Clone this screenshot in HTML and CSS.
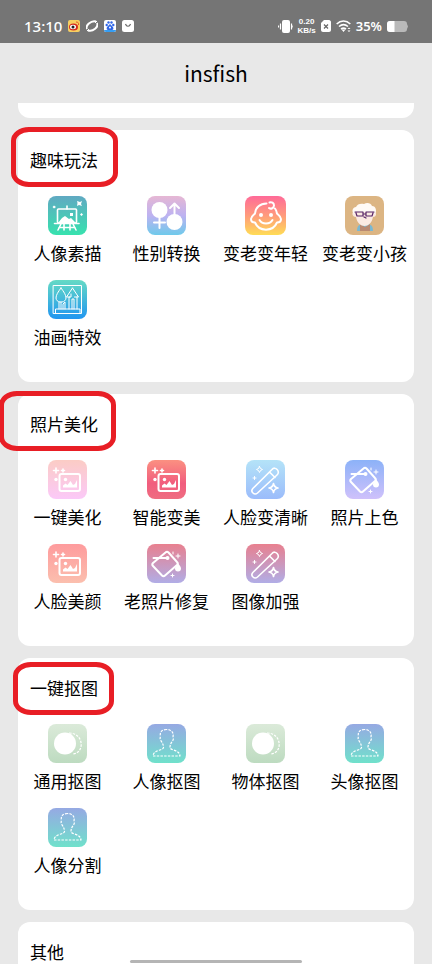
FILE: index.html
```html
<!DOCTYPE html>
<html lang="zh-CN">
<head>
    <meta charset="UTF-8">
    <meta name="viewport" content="width=device-width, initial-scale=1.0">
    <title>insfish</title>
    <link rel="stylesheet" href="styles.css">
</head>
<body>
    <!-- shared icon shapes -->
    <svg class="sprite" aria-hidden="true">
        <symbol id="i-easel" viewBox="0 0 39 39">
            <rect x="9.5" y="13" width="19" height="14" rx="1"/>
            <path d="M19 10v3M6.500 27.500H31M13 28l-3 6M25 28l3 6M16 28v6M22 28v6M11 31.500h16"/>
            <path class="solid" d="M10 27l4-5 3-2 4 3 2-1 5 5zM22 17h3v3h-3zM29 5l3 1 2-1-1 3 1 2-3-1-2 1 .5-3zM6 9.500l2 1.500-2 1.500L4.500 11zM33.500 17l1.500 1.500-1.500 1.500-1.500-1.500z"/>
        </symbol>
        <symbol id="i-gender" viewBox="0 0 39 39">
            <circle class="solid" cx="12.500" cy="14" r="8"/>
            <circle class="solid" cx="27.500" cy="26" r="8"/>
            <path class="thick" d="M12.500 20v12M7 26.500h11M27.500 20V8M23 12l4.500-4.500L32 12"/>
        </symbol>
        <symbol id="i-baby" viewBox="0 0 41 39">
            <path class="thick" d="M21.500 7.500C15 7.500 10.500 11.500 10 17.500c-1.500 1.500-4 3-4 5.500s2 3.500 4 3.500c4 9.500 18 9.500 22 0 2 0 4-1 4-3.500s-2.500-4-4-5.500c-.3-2-.8-3.500-2-5"/>
            <path class="thick" d="M24.500 6.500c2-1 4.500.5 4.500 3s-3 4-5 2.500"/>
            <path class="thick" d="M14.500 24c2.500 4.500 10.500 4.500 13 0"/>
            <circle class="solid" cx="16" cy="19" r="2"/>
            <circle class="solid" cx="26" cy="19" r="2"/>
        </symbol>
        <symbol id="i-elder" viewBox="0 0 39 39">
            <path fill="#79b8d2" stroke="none" d="M12 35c0-5 2-7 6-7h4c4 0 6 2 6 7z"/>
            <path fill="#b98a72" stroke="none" d="M15 35v-7l5 3 5-3v7z"/>
            <path fill="#fbeae2" stroke="none" d="M10 15c-4 1-3 6 1 6 1 6 5 9 8.500 9s7.500-3 8.500-9c4 0 4-5 0-6z"/>
            <path fill="#fffaf5" stroke="none" d="M9 18c-3-3-1-7 2-7 1-3 5-4 8-3 3-2 7-1 8 2 4 0 5 5 3 8l-3-2H12z"/>
            <path class="glasses" d="M10 16h8v4h-6l-1-3M29 16h-8v4h6l1-3M18 18h3M19 21l2 1"/>
        </symbol>
        <symbol id="i-paint" viewBox="0 0 39 39">
            <path class="thin" d="M5.500 5.500h28v28h-28zM13 8c3 4 5 7 5 10 0 2-2 4-4 4h-2c-2 0-4-2-4-4 0-3 2-6 5-10zM13 22v7M11 22v7M15 29v-5l2-2v7M24.500 8l6 9h-4M24.500 8l-6 9h3M21 29V17h2v-3M24 29V19h2v10M29 29V17M7.500 33v-4H32v4"/>
        </symbol>
        <symbol id="i-photo" viewBox="0 0 39 39">
            <rect class="thick" x="11.500" y="14" width="20.500" height="17" rx="2"/>
            <path class="solid" d="M15 27.500v-2l2.500-2 2 1.500 3-4 2.500 4 2-1 2-4v7.500z"/>
            <circle class="solid" cx="17.500" cy="19.500" r="1.700"/>
            <circle class="solid" cx="8" cy="19.500" r="1.700"/>
            <path d="M8 8v5M5.500 10.500h5M15 9v3M13.500 10.500h3"/>
        </symbol>
        <symbol id="i-wand" viewBox="0 0 39 39">
            <path d="M6.800 28.500L26 9.500c3-4 9 2 5 5.500L11.500 33c-3 2.500-7.500-1-4.700-4.500zM23.500 12l5.500 5.500"/>
            <path d="M27.500 23.500c.5 3 1.500 4 4.500 4.500-3 .5-4 1.500-4.500 4.500-.5-3-1.500-4-4.500-4.500 3-.5 4-1.500 4.500-4.500z"/>
            <path class="thin" d="M13.500 6.500l1 2 2 1-2 1-1 2-1-2-2-1 2-1z"/>
            <path class="thin" d="M8.500 16.500v3M7 18h3"/>
        </symbol>
        <symbol id="i-bucket" viewBox="0 0 39 39">
            <path class="thick" d="M18.500 8.500c1-1 2-1 3 0L30 18c1 1 1 2 0 3L18 31.500c-1 1-2 1-3 0L6 22c-1-1-1-2 0-3zM6.500 14H20"/>
            <circle class="solid" cx="20.500" cy="14" r="2"/>
            <path class="solid" d="M31 19c2 3 3 4 3 5.500a3 3 0 0 1-6 0c0-1.500 1-2.500 3-5.500z"/>
            <path class="thin" d="M31 10v4M29 12h4M25.500 30v3M24 31.500h3M26 8v2"/>
        </symbol>
        <symbol id="i-cutout" viewBox="0 0 39 39">
            <circle class="solid" cx="17" cy="19.500" r="11"/>
            <path class="dash" d="M21 9c15 0 16 20 4 21"/>
        </symbol>
        <symbol id="i-person" viewBox="0 0 39 39">
            <path class="dash" d="M19.500 5.500c-5 0-7 3-6 7-1 2 0 4 1 5 1 2 2 3 2 6 0 3-10 2-10.500 8.500h27C32.500 25.500 23 26.500 23 23.500c0-3 1-4 2-6 1-1 2-3 1-5 1-4-2-7-6.500-7z"/>
        </symbol>
    </svg>

    <div class="phone">
        <div class="status-bar">
            <div class="status-group">
                <span class="clock">13:10</span>
                <svg class="status-icon" viewBox="0 0 12 12" aria-hidden="true">
                    <rect width="12" height="12" rx="2" fill="#f7cf61"/>
                    <ellipse cx="5.500" cy="7" rx="4.500" ry="3.500" fill="#d52b1e"/>
                    <ellipse cx="5" cy="7" rx="3" ry="2.200" fill="#fff"/>
                    <circle cx="5" cy="7" r="1.500" fill="#222"/>
                    <path d="M8 2c2 0 3 1 2.500 3" fill="none" stroke="#e2562a"/>
                </svg>
                <svg class="status-icon" viewBox="0 0 12 12" aria-hidden="true">
                    <path d="M1 9C-1 6 5 0 10 1.500M11 3c2 4-4 9-9 7.500" fill="none" stroke="#fff" stroke-width="2"/>
                    <path d="M1 11l2-2M9 3l2-2" stroke="#fff"/>
                </svg>
                <svg class="status-icon" viewBox="0 0 12 12" aria-hidden="true">
                    <rect width="12" height="12" rx="2" fill="#fff"/>
                    <path d="M0 10h12c0 1-1 2-2 2H2c-1 0-2-1-2-2z" fill="#369df2"/>
                    <g fill="#2f66e8">
                        <circle cx="4.500" cy="2.500" r="1.200"/><circle cx="7.500" cy="2.500" r="1.200"/>
                        <circle cx="2.700" cy="5" r="1.200"/><circle cx="9.300" cy="5" r="1.200"/>
                        <path d="M6 4l3 3c1 2 0 3-1 3H4C3 10 2 9 3 7z"/>
                    </g>
                    <circle cx="6" cy="7.500" r="1" fill="#fff"/>
                </svg>
                <svg class="status-icon" viewBox="0 0 12 12" aria-hidden="true">
                    <rect width="12" height="12" rx="2.500" fill="#fff"/>
                    <path d="M3.500 4c1 3 4 3 5 0" fill="none" stroke="#666" stroke-width="1.200"/>
                </svg>
            </div>
            <div class="status-group status-right">
                <svg class="vibrate" viewBox="0 0 15 13" aria-hidden="true">
                    <rect x="4" width="8" height="13" rx="2" fill="#fff"/>
                    <path d="M2.500 3.500v6M13.500 3.500v6M.5 5.500v2M15 5.500v2" stroke="#fff" stroke-width="1.200"/>
                </svg>
                <span class="speed">0.20<br>KB/s</span>
                <svg class="sim" viewBox="0 0 10 12" aria-hidden="true">
                    <path d="M3 0h5c1 0 2 1 2 2v8c0 1-1 2-2 2H2c-1 0-2-1-2-2V3z" fill="#fff"/>
                    <path d="M3 4.500l4 4M7 4.500l-4 4" stroke="#666" stroke-width="1.200"/>
                </svg>
                <svg class="wifi" viewBox="0 0 15 12" aria-hidden="true">
                    <path d="M.7 4c4-4 9.600-4 13.600 0M3 6.500c3-2.500 6-2.500 9 0M5 9c2-1.500 3-1.500 5 0" fill="none" stroke="#fff" stroke-width="1.600"/>
                    <path d="M5.500 9.500h4l-2 2.500zM13 7.500l1.500 1.500h-3zM13 12l-1.500-1.500h3z" fill="#fff"/>
                </svg>
                <span class="percent">35%</span>
                <svg class="battery" viewBox="0 0 21 11" aria-hidden="true">
                    <path d="M3 0h14c2 0 3 1 3 3l1 2.500L20 8c0 2-1 3-3 3H3c-2 0-3-1-3-3V3c0-2 1-3 3-3z" fill="#b9b9b9"/>
                    <path d="M3 0h4.500v11H3c-2 0-3-1-3-3V3c0-2 1-3 3-3z" fill="#fff"/>
                </svg>
            </div>
        </div>

        <header class="title-bar">
            <h1>insfish</h1>
        </header>

        <main class="content">
            <div class="card card-end"></div>

            <section class="card">
                <h2><span class="mark mark-fun"></span>趣味玩法</h2>
                <div class="tools">
                    <button class="tool"><svg class="tile easel"><use href="#i-easel"/></svg>人像素描</button>
                    <button class="tool"><svg class="tile gender"><use href="#i-gender"/></svg>性别转换</button>
                    <button class="tool"><svg class="tile tile-wide baby"><use href="#i-baby"/></svg>变老变年轻</button>
                    <button class="tool"><svg class="tile elder"><use href="#i-elder"/></svg>变老变小孩</button>
                    <button class="tool"><svg class="tile paint"><use href="#i-paint"/></svg>油画特效</button>
                </div>
            </section>

            <section class="card">
                <h2><span class="mark mark-beauty"></span>照片美化</h2>
                <div class="tools">
                    <button class="tool"><svg class="tile pink"><use href="#i-photo"/></svg>一键美化</button>
                    <button class="tool"><svg class="tile red"><use href="#i-photo"/></svg>智能变美</button>
                    <button class="tool"><svg class="tile sky"><use href="#i-wand"/></svg>人脸变清晰</button>
                    <button class="tool"><svg class="tile lilac"><use href="#i-bucket"/></svg>照片上色</button>
                    <button class="tool"><svg class="tile coral"><use href="#i-photo"/></svg>人脸美颜</button>
                    <button class="tool"><svg class="tile dusk"><use href="#i-bucket"/></svg>老照片修复</button>
                    <button class="tool"><svg class="tile dusk"><use href="#i-wand"/></svg>图像加强</button>
                </div>
            </section>

            <section class="card">
                <h2><span class="mark mark-cutout"></span>一键抠图</h2>
                <div class="tools">
                    <button class="tool"><svg class="tile sage"><use href="#i-cutout"/></svg>通用抠图</button>
                    <button class="tool"><svg class="tile person"><use href="#i-person"/></svg>人像抠图</button>
                    <button class="tool"><svg class="tile sage"><use href="#i-cutout"/></svg>物体抠图</button>
                    <button class="tool"><svg class="tile person"><use href="#i-person"/></svg>头像抠图</button>
                    <button class="tool"><svg class="tile person"><use href="#i-person"/></svg>人像分割</button>
                </div>
            </section>

            <section class="card">
                <h2>其他</h2>
            </section>
        </main>
        <div class="home-bar"></div>
    </div>
</body>
</html>
```
FILE: styles.css
```css
* {
    box-sizing: border-box;
}
body {
    margin: 0;
    background-color: #e8e8e8;
    color: #000;
    font-family: "Noto Sans CJK SC", sans-serif;
}
h1, h2 {
    margin: 0;
    font-weight: 400;
}
.sprite {
    display: none;
}
.phone {
    position: relative;
    display: flex;
    flex-direction: column;
    height: 100vh;
    overflow: hidden;
}

/* status bar */
.status-bar {
    display: flex;
    flex: none;
    justify-content: space-between;
    height: 43px;
    padding: 9px 24px 0;
    background-color: #757575;
    color: #fff;
    font-family: "Noto Sans", sans-serif;
}
.status-group {
    display: flex;
    align-items: center;
    gap: 6px;
}
.status-right {
    gap: 5px;
}
.clock {
    font-size: 15px;
    font-weight: 500;
}
.status-icon {
    width: 12px;
    height: 12px;
}
.speed {
    font-family: "Liberation Sans", sans-serif;
    font-size: 8px;
    font-weight: 700;
    line-height: 9px;
    text-align: center;
}
.percent {
    font-size: 13px;
    font-weight: 600;
}
.vibrate {
    width: 15px;
    height: 13px;
}
.sim {
    width: 10px;
    height: 12px;
}
.wifi {
    width: 15px;
    height: 12px;
}
.battery {
    width: 21px;
    height: 11px;
}

.title-bar {
    display: flex;
    flex: none;
    align-items: center;
    justify-content: center;
    height: 60px;
}
.title-bar h1 {
    font-size: 21px;
}

/* cards */
.content {
    display: flex;
    flex: 1;
    flex-direction: column;
    gap: 12px;
    min-height: 0;
    padding: 0 18px;
}
.card {
    flex: none;
    padding-bottom: 33px;
    border-radius: 12px;
    background-color: #fff;
}
.card-end {
    height: 15px;
    padding: 0;
    border-radius: 0 0 12px 12px;
}
.card h2 {
    position: relative;
    padding: 18px 12px 24px;
    font-size: 17px;
    line-height: 24px;
}
.tools {
    display: grid;
    grid-template-columns: repeat(4, 1fr);
    row-gap: 15px;
}
.tool {
    display: flex;
    flex-direction: column;
    align-items: center;
    gap: 6px;
    padding: 0;
    border: none;
    background: none;
    color: #000;
    font-family: inherit;
    font-size: 17px;
    line-height: 24px;
    white-space: nowrap;
    cursor: pointer;
}

/* hand drawn rings round the section titles */
.mark {
    position: absolute;
    top: -3px;
    height: 60px;
    border: 5px solid #e81e25;
    border-radius: 18px / 14px;
}
.mark-fun {
    left: -7px;
    width: 107px;
}
.mark-beauty {
    left: -19px;
    width: 117px;
}
.mark-cutout {
    top: 4px;
    left: -5px;
    width: 101px;
    height: 53px;
}

/* icon tiles */
.tile {
    width: 39px;
    height: 39px;
    border-radius: 8px;
    fill: none;
    stroke: #fff;
    stroke-width: 1.6;
    stroke-linecap: round;
    stroke-linejoin: round;
}
.tile-wide {
    width: 41px;
}
.solid {
    fill: #fff;
    stroke: none;
}
.thick {
    stroke-width: 2;
}
.thin {
    stroke-width: 1;
}
.dash {
    stroke-width: 1.2;
    stroke-linecap: butt;
    stroke-dasharray: 2.5 1.2;
}
.glasses {
    stroke: #572366;
    stroke-width: 1.2;
}
.easel { background: linear-gradient(#60a9c2, #37e2ae); }
.gender { background: linear-gradient(#e6b7d4, #bdb2f1 50%, #6fcaeb); }
.baby { background: linear-gradient(#ff6a98, #ff9b7c 50%, #ffdc55); }
.elder { background: #dcb583; }
.paint { background: linear-gradient(#65dac5, #2196f0); }
.pink { background: linear-gradient(#fbccc5, #fbc9f8); }
.red { background: linear-gradient(#fb9081, #f15d7e 60%, #ef6d81); }
.sky { background: linear-gradient(#b4e3f8, #9bbcfb); }
.lilac { background: linear-gradient(#8cb2f8, #cfc1fb); }
.coral { background: linear-gradient(#fe9b9d, #fbbfae); }
.dusk { background: linear-gradient(#e8808f, #b1ade6); }
.sage { background: linear-gradient(#dbead9, #bddbc0); }
.person { background: linear-gradient(#96a9e3, #70e1cb); }

.home-bar {
    position: absolute;
    bottom: 1px;
    left: 30%;
    width: 40%;
    height: 3px;
    border-radius: 2px;
    background-color: #b5b5b5;
}
```
